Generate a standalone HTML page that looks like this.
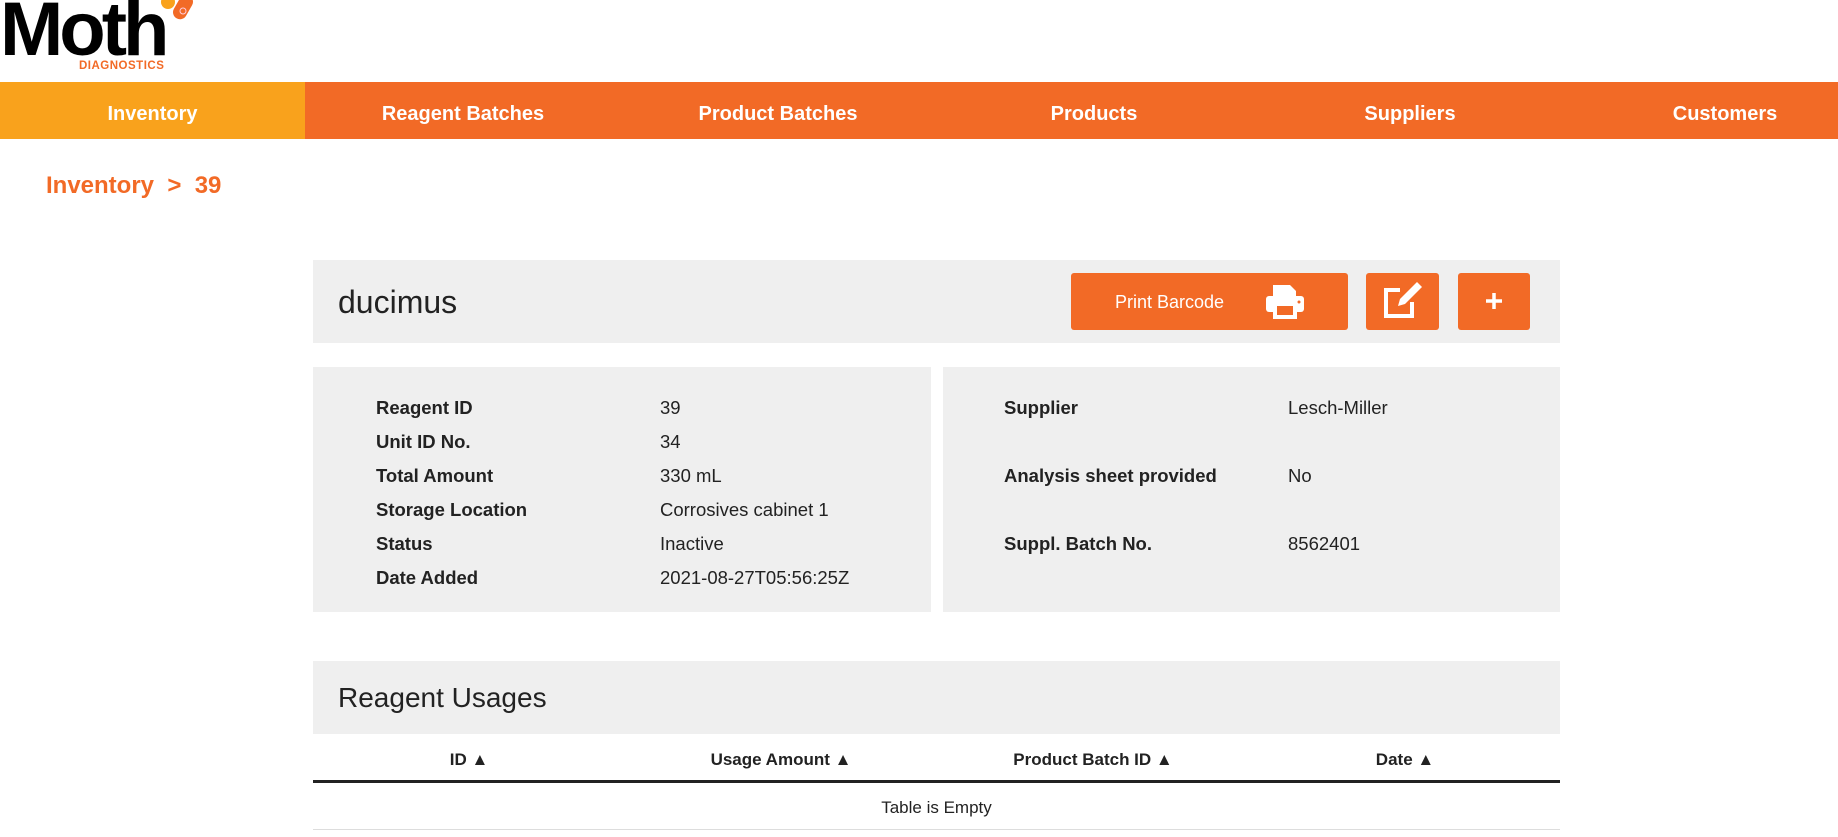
<!DOCTYPE html>
<html><head><style>
*{margin:0;padding:0;box-sizing:border-box}
body{width:1838px;height:837px;overflow:hidden;background:#fff;font-family:"Liberation Sans",sans-serif;color:#222;position:relative}
.a{position:absolute}
.nav{top:82px;left:0;width:1838px;height:57px;background:#f26a26}
.nav div{position:absolute;top:4px;height:57px;line-height:57px;color:#fff;font-weight:bold;font-size:20px;transform:translateX(-50%);white-space:nowrap}
.box{background:#efefef}
.lbl{font-weight:bold;font-size:18.5px;transform:translateY(-50%)}
.val{font-size:18.5px;transform:translateY(-50%)}
.btn{background:#f26a26;border-radius:3px}
.th{font-weight:bold;font-size:17px;transform:translate(-50%,-50%);white-space:nowrap}
</style></head><body>
<div class="a" style="left:0;top:-14px;font-size:76px;font-weight:bold;letter-spacing:-4px;color:#000">Moth</div>
<div class="a" style="left:79px;top:60px;font-size:11.5px;font-weight:bold;color:#f26a26;letter-spacing:.5px">DIAGNOSTICS</div>
<svg class="a" style="left:160px;top:0" width="40" height="24"><circle cx="8" cy="2" r="7" fill="#f9a21c"/><rect x="16" y="-6" width="14" height="26" rx="7" transform="rotate(30 23 7)" fill="#f26a26"/><circle cx="23" cy="11" r="3" fill="none" stroke="#fcd" stroke-width="1"/></svg>
<div class="a nav">
<div style="left:0;width:305px;top:0;padding-top:4px;transform:none;text-align:center;background:#f9a21c">Inventory</div>
<div style="left:463px">Reagent Batches</div>
<div style="left:778px">Product Batches</div>
<div style="left:1094px">Products</div>
<div style="left:1410px">Suppliers</div>
<div style="left:1725px">Customers</div>
</div>
<div class="a" style="left:46px;top:172px;font-size:24px;font-weight:bold;color:#f26a26;white-space:pre">Inventory  &gt;  39</div>
<div class="a box" style="left:313px;top:260px;width:1247px;height:83px"></div>
<div class="a" style="left:338px;top:284px;font-size:32px">ducimus</div>
<div class="a btn" style="left:1071px;top:273px;width:277px;height:57px"></div>
<div class="a" style="left:1115px;top:292px;font-size:18px;color:#fff">Print Barcode</div>
<svg class="a" style="left:1265px;top:283px" width="40" height="38" viewBox="0 0 40 38"><path d="M8 2h17l6 6v6H8z" fill="#fff"/><rect x="1" y="13" width="38" height="16" rx="3" fill="#fff"/><rect x="8" y="22" width="24" height="14" fill="#fff"/><rect x="12" y="23" width="16" height="9" fill="#f26a26"/><circle cx="34" cy="19" r="1.5" fill="#f26a26"/></svg>
<div class="a btn" style="left:1366px;top:273px;width:73px;height:57px"></div>
<svg class="a" style="left:1380px;top:280px" width="46" height="42" viewBox="0 0 46 42"><path d="M20 10H6v26h26V22" fill="none" stroke="#fff" stroke-width="4"/><path d="M18 26l2-7 17-17 5 5-17 17z" fill="#fff"/></svg>
<div class="a btn" style="left:1458px;top:273px;width:72px;height:57px"></div>
<svg class="a" style="left:1485px;top:292px" width="18" height="18"><path d="M9 1v16M1 9h16" stroke="#fff" stroke-width="3.5"/></svg>
<div class="a box" style="left:313px;top:367px;width:618px;height:245px"></div>
<div class="a box" style="left:943px;top:367px;width:617px;height:245px"></div>
<div class="a lbl" style="left:376px;top:408px">Reagent ID</div><div class="a val" style="left:660px;top:408px">39</div>
<div class="a lbl" style="left:376px;top:442px">Unit ID No.</div><div class="a val" style="left:660px;top:442px">34</div>
<div class="a lbl" style="left:376px;top:476px">Total Amount</div><div class="a val" style="left:660px;top:476px">330 mL</div>
<div class="a lbl" style="left:376px;top:510px">Storage Location</div><div class="a val" style="left:660px;top:510px">Corrosives cabinet 1</div>
<div class="a lbl" style="left:376px;top:544px">Status</div><div class="a val" style="left:660px;top:544px">Inactive</div>
<div class="a lbl" style="left:376px;top:578px">Date Added</div><div class="a val" style="left:660px;top:578px">2021-08-27T05:56:25Z</div>
<div class="a lbl" style="left:1004px;top:408px">Supplier</div><div class="a val" style="left:1288px;top:408px">Lesch-Miller</div>
<div class="a lbl" style="left:1004px;top:476px">Analysis sheet provided</div><div class="a val" style="left:1288px;top:476px">No</div>
<div class="a lbl" style="left:1004px;top:544px">Suppl. Batch No.</div><div class="a val" style="left:1288px;top:544px">8562401</div>
<div class="a box" style="left:313px;top:661px;width:1247px;height:73px"></div>
<div class="a" style="left:338px;top:682px;font-size:28px">Reagent Usages</div>
<div class="a th" style="left:469px;top:760px">ID ▲</div>
<div class="a th" style="left:781px;top:760px">Usage Amount ▲</div>
<div class="a th" style="left:1093px;top:760px">Product Batch ID ▲</div>
<div class="a th" style="left:1405px;top:760px">Date ▲</div>
<div class="a" style="left:313px;top:780px;width:1247px;height:3px;background:#222"></div>
<div class="a" style="left:0;width:1873px;top:798px;text-align:center;font-size:17px">Table is Empty</div>
<div class="a" style="left:313px;top:829px;width:1247px;height:1px;background:#ddd"></div>
</body></html>
